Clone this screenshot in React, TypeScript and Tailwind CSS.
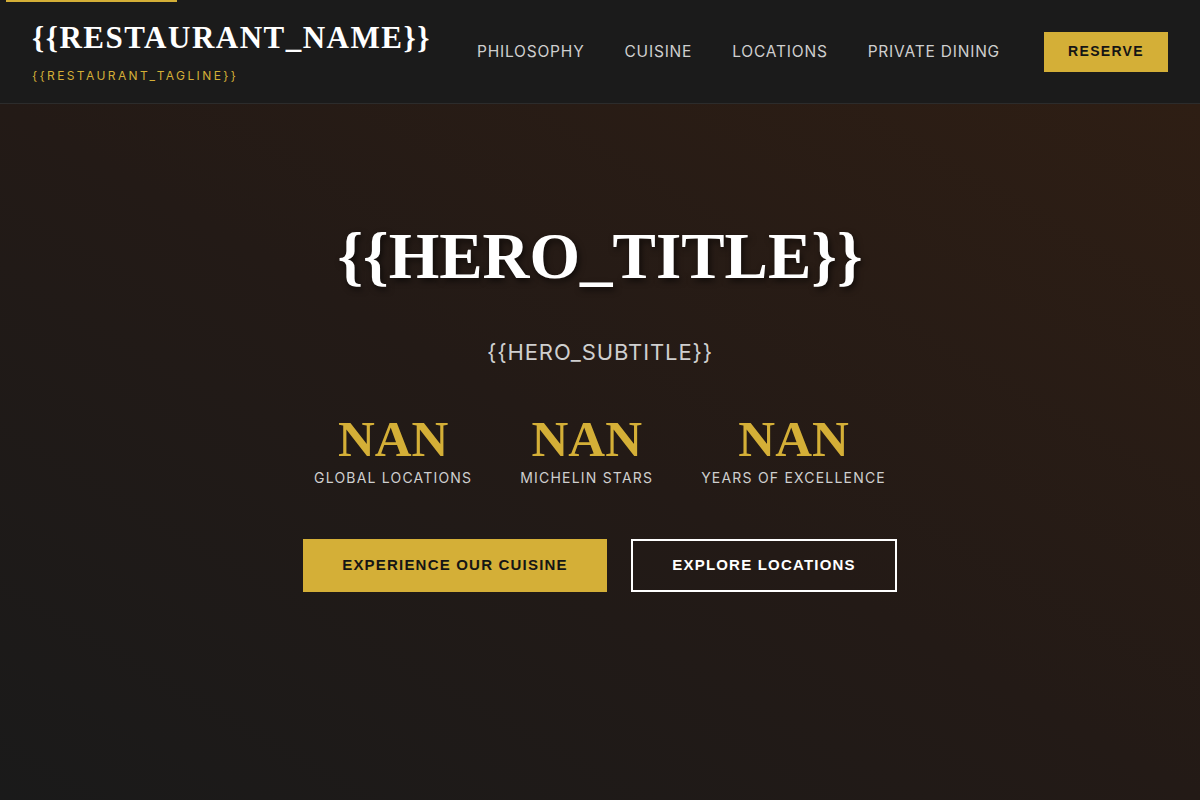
export default function App() {
  return (
    <div className="min-h-screen w-[1200px] h-[800px] overflow-hidden bg-[#1a1a1a] font-['Inter',sans-serif] text-white">
      <header className="relative flex h-[104px] items-center justify-between border-b border-[#2c2c2c] bg-[#1b1b1b] px-8">
        <div className="absolute left-[6px] top-0 h-[2px] w-[171px] bg-[#d4af37]" />
        <div className="flex flex-col">
          <div className="font-['Liberation_Serif',serif] text-[31px] font-semibold leading-[36px] tracking-[1.5px] text-white">
            {"{{RESTAURANT_NAME}}"}
          </div>
          <div className="mt-[13px] text-[12px] leading-[14px] tracking-[2.4px] text-[#d4af37]">
            {"{{RESTAURANT_TAGLINE}}"}
          </div>
        </div>
        <nav className="flex items-center">
          <div className="flex items-center gap-10 whitespace-nowrap text-[15.5px] tracking-[0.8px] text-[#cfcfcf]">
            <a>PHILOSOPHY</a>
            <a>CUISINE</a>
            <a>LOCATIONS</a>
            <a>PRIVATE DINING</a>
          </div>
          <button className="ml-11 flex h-10 w-[124px] items-center justify-center bg-[#d4af37] font-['Liberation_Sans',sans-serif] text-[14px] font-bold tracking-[1.3px] text-[#151515]">
            RESERVE
          </button>
        </nav>
      </header>
      <main className="flex h-[696px] flex-col items-center bg-[linear-gradient(30deg,#1a1a1a_0%,#231a16_50%,#2e1e14_100%)] pt-[114px]">
        <h1 className="font-['Liberation_Serif',serif] text-[65px] font-semibold leading-[76px] text-white [text-shadow:2px_3px_6px_rgba(0,0,0,0.6)]">
          {"{{HERO_TITLE}}"}
        </h1>
        <p className="mt-[44px] text-[22px] leading-[28px] tracking-[0.9px] text-[#cfcfcf]">
          {"{{HERO_SUBTITLE}}"}
        </p>
        <div className="mt-[45px] flex items-start gap-12">
          {[
            "GLOBAL LOCATIONS",
            "MICHELIN STARS",
            "YEARS OF EXCELLENCE",
          ].map((label) => (
            <div key={label} className="flex flex-col items-center">
              <div className="font-['Liberation_Serif',serif] text-[51px] font-semibold uppercase leading-[56px] text-[#d4af37]">
                NaN
              </div>
              <div className="mt-[2px] text-[14px] leading-[18px] tracking-[1.2px] text-[#cfcfcf]">
                {label}
              </div>
            </div>
          ))}
        </div>
        <div className="mt-[52px] flex gap-6">
          <button className="flex h-[53px] w-[304px] items-center justify-center bg-[#d4af37] font-['Liberation_Sans',sans-serif] text-[15px] font-bold tracking-[1.2px] text-[#151515]">
            EXPERIENCE OUR CUISINE
          </button>
          <button className="flex h-[53px] w-[266px] items-center justify-center border-2 border-white font-['Liberation_Sans',sans-serif] text-[15px] font-bold tracking-[1.2px] text-white">
            EXPLORE LOCATIONS
          </button>
        </div>
      </main>
    </div>
  );
}
